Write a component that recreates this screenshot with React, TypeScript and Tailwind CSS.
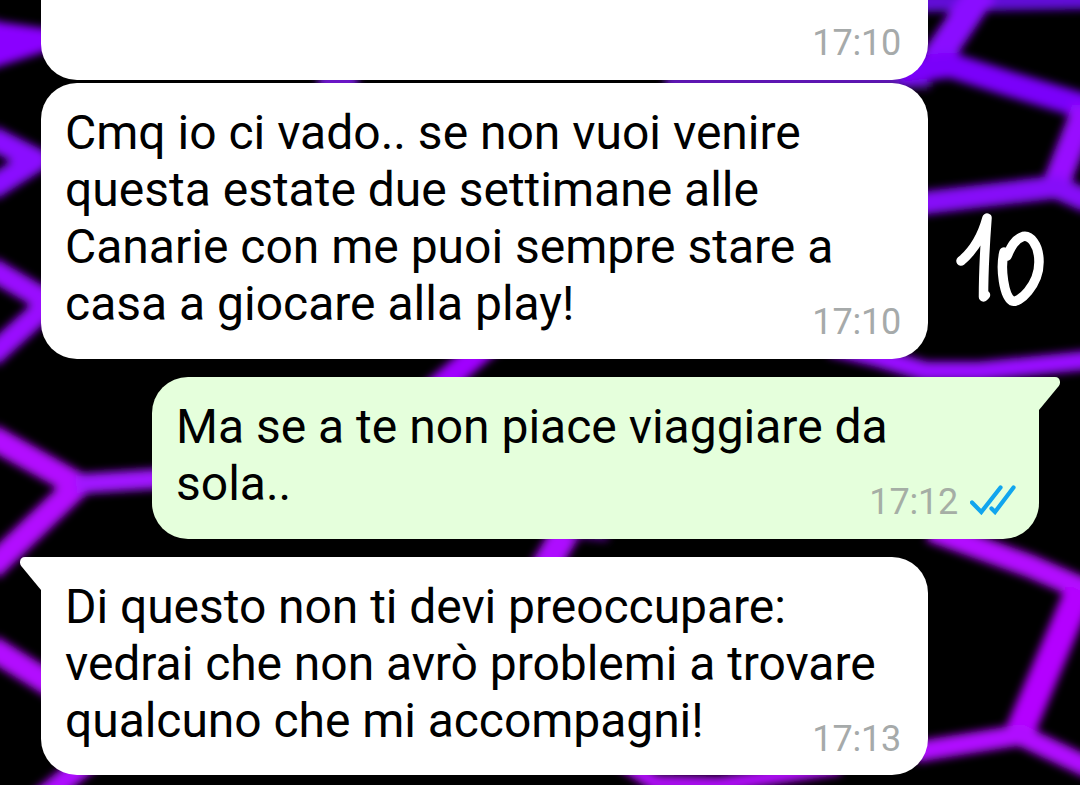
import type { ReactNode } from 'react';
import clsx from 'clsx';

function Wallpaper() {
  return (
    <svg
      viewBox="0 0 1080 785"
      fill="none"
      className="absolute inset-0 h-full w-full"
      aria-hidden="true"
    >
      <defs>
        <filter id="glow" x="-10%" y="-10%" width="120%" height="120%">
          <feGaussianBlur stdDeviation="4.2" />
        </filter>
      </defs>
      <g filter="url(#glow)" strokeLinejoin="round">
        {/* left side */}
        <path d="M-20 16 L0 22 L50 29 L50 50 L0 66 L-20 72 Z" fill="#8a05ff" />
        <path d="M-10 137 L36 160 L-10 189" stroke="#8a0aff" strokeWidth="24" />
        <path d="M-10 268 L50 303 L-10 357" stroke="#9a08ff" strokeWidth="23" />
        <path d="M-10 436 L78 485 L-10 569" stroke="#b208ff" strokeWidth="25" />
        <path d="M76 484 L170 478" stroke="#a014ff" strokeWidth="20" />
        <path d="M-10 647 L60 690" stroke="#b208ff" strokeWidth="25" />
        <path d="M95 756 L40 800" stroke="#ae10ff" strokeWidth="22" />
        {/* between the bubbles */}
        <path d="M318 82 H358" stroke="#6a16c8" strokeWidth="20" />
        <path d="M665 83 L930 79" stroke="#6015b8" strokeWidth="18" />
        <path d="M496 338 L430 394" stroke="#a005ff" strokeWidth="24" />
        <path d="M570 525 L542 572" stroke="#ae08ff" strokeWidth="28" />
        <path d="M570 533 L608 537" stroke="#5a0a96" strokeWidth="8" />
        <path d="M620 760 L655 783 L720 785 L840 766" stroke="#ae10f5" strokeWidth="16" />
        {/* right side */}
        <path d="M915 2 L1090 -1" stroke="#6210d8" strokeWidth="20" />
        <path d="M983 -10 L934 62" stroke="#8a08ff" strokeWidth="30" />
        <path d="M900 72 L950 65 L1010 84 L1090 108" stroke="#7a06fa" strokeWidth="25" />
        <path d="M1086 108 L1056 184" stroke="#980cff" strokeWidth="27" />
        <path d="M915 204 L1056 187 L1090 202" stroke="#860af8" strokeWidth="23" />
        <path d="M830 346 L880 358 L925 371 L980 371 L1090 360" stroke="#980cff" strokeWidth="19" />
        <path d="M930 530 L1030 566 L1090 592" stroke="#b210ff" strokeWidth="23" />
        <path d="M1080 590 L1018 736" stroke="#b404ff" strokeWidth="29" />
        <path d="M915 752 L1020 735 L1090 768" stroke="#b00cff" strokeWidth="21" />
      </g>
    </svg>
  );
}

function DoubleCheck() {
  return (
    <svg width="46" height="30" viewBox="0 0 46 30" fill="none" className="-mt-1 ml-3" aria-label="letto">
      <path
        d="M2 17.500 L11.300 27 L30.500 2.500 M21.500 23.500 L25 27 L43.500 2.500"
        stroke="#11a5ee"
        strokeWidth="4.2"
        strokeLinecap="round"
      />
    </svg>
  );
}

interface BubbleProps {
  children?: ReactNode;
  time: string;
  sent?: boolean;
  tail?: boolean;
  className?: string;
}

function Bubble({ children, time, sent, tail, className }: BubbleProps) {
  return (
    <div
      className={clsx(
        'relative grid w-[887px] shrink-0 rounded-[36px]',
        sent ? 'self-end bg-[#e5ffdc]' : 'self-start bg-white',
        tail && (sent ? 'rounded-tr-none' : 'rounded-tl-none'),
        className
      )}
    >
      {tail && (
        <svg
          width="22"
          height="33"
          viewBox="0 0 22 33"
          className={clsx('absolute top-0', sent ? '-right-[21px] -scale-x-100' : '-left-[21px]')}
          aria-hidden="true"
        >
          <path d="M22 0 H5 C0.5 0 -1.5 5 1.2 9 L21 33 H22 Z" fill={sent ? '#e5ffdc' : '#fff'} />
        </svg>
      )}
      <p className="col-start-1 row-start-1 whitespace-nowrap pl-6 pt-[21px] text-[48px] leading-[57px] text-black">
        {children}
      </p>
      <div
        className={clsx(
          'col-start-1 row-start-1 flex items-center self-end justify-self-end pb-4 text-[36px] leading-[42px] tracking-[-0.2px]',
          sent ? 'pr-[23px] text-[#a5aea5]' : 'pr-[27px] text-[#a6aaaa]',
          time === '17:13' && 'pb-[15px]'
        )}
      >
        <span>{time}</span>
        {sent && <DoubleCheck />}
      </div>
    </div>
  );
}

// handwritten number next to the second message
function Scribble() {
  return (
    <svg
      width="100"
      height="104"
      viewBox="0 0 100 104"
      fill="none"
      stroke="#fff"
      strokeWidth="9.5"
      strokeLinecap="round"
      strokeLinejoin="round"
      className="absolute left-[950px] top-[208px]"
      aria-label="10"
    >
      <path d="M11 53 C22 44 31 32 37 10 C35.5 30 33.5 60 33.5 89 L35.5 87" />
      <path d="M54 44 C50 61 54 88 62 93 C69 96 89 77 89 54 C89 36 80 27 73 28.5 C65 31 61 39 57 48" />
    </svg>
  );
}

export default function App() {
  return (
    <main className="relative h-[785px] w-[1080px] overflow-hidden bg-black font-['Roboto',sans-serif]">
      <Wallpaper />
      <div className="relative flex h-full flex-col px-[41px]">
        <Bubble time="17:10" className="h-20 rounded-t-none" />
        <Bubble time="17:10" className="mt-[3px] h-[276px]">
          Cmq io ci vado.. se non vuoi venire
          <br />
          questa estate due settimane alle
          <br />
          Canarie con me puoi sempre stare a
          <br />
          casa a giocare alla play!
        </Bubble>
        <Bubble time="17:12" sent tail className="mt-[18px] h-[162px]">
          Ma se a te non piace viaggiare da
          <br />
          sola..
        </Bubble>
        <Bubble time="17:13" tail className="mt-[18px] h-[218px] tracking-[-0.05px]">
          Di questo non ti devi preoccupare:
          <br />
          vedrai che non avrò problemi a trovare
          <br />
          qualcuno che mi accompagni!
        </Bubble>
      </div>
      <Scribble />
    </main>
  );
}
